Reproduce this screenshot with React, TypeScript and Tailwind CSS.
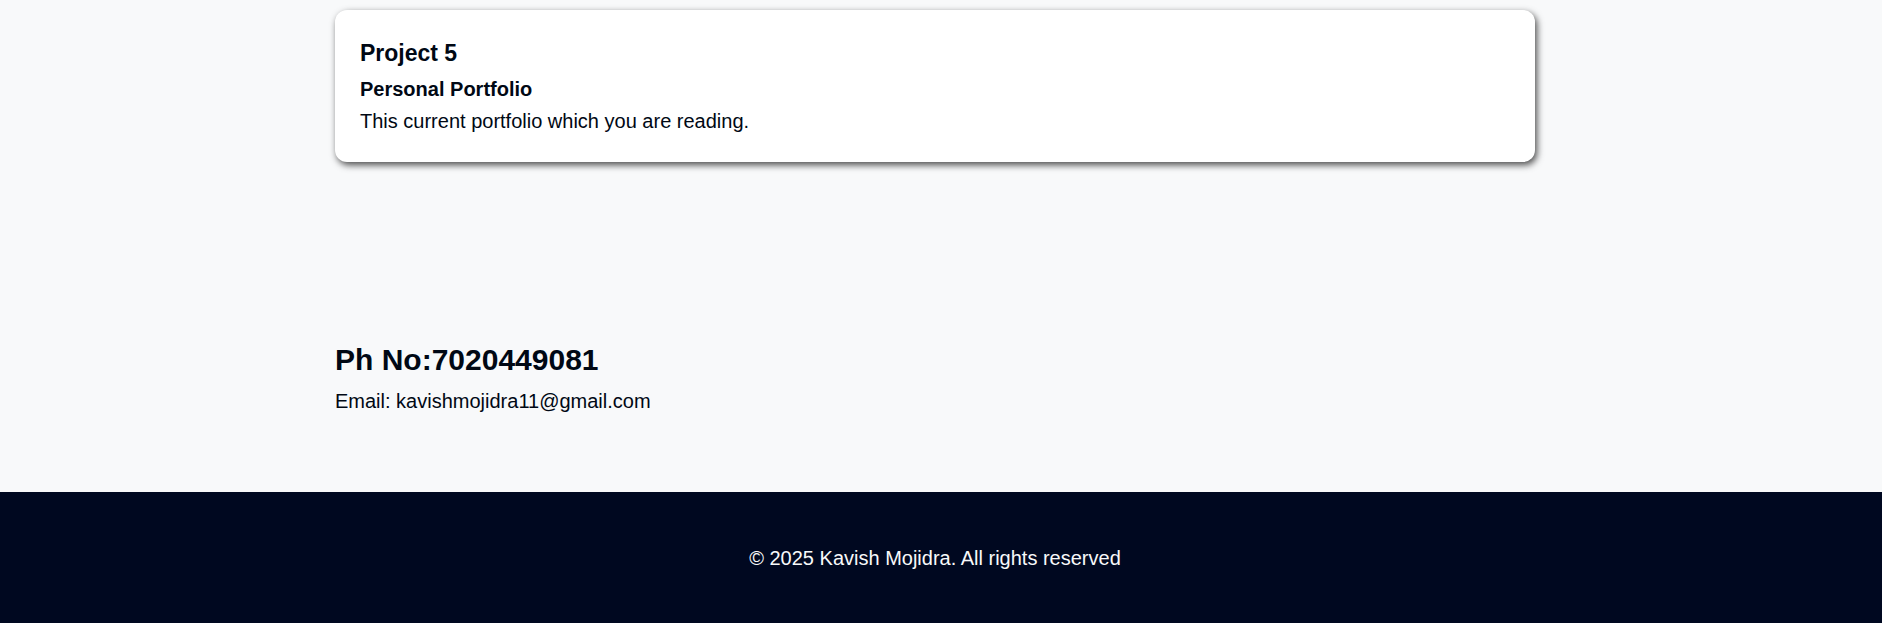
import React from "react";

export default function App() {
  return (
    <div className="min-h-screen bg-[#f8f9fa] font-['Liberation_Sans',Arial,sans-serif] text-[#000814]">
      <main className="pt-[10px] pb-[79px]">
        <div className="ml-[335px] w-[1200px]">
          <div className="rounded-[12px] bg-white px-[25px] pt-[29px] pb-[29px] shadow-[2px_3px_7px_rgba(0,0,0,0.7)]">
            <h3 className="text-[23px] leading-[28px] font-bold">Project 5</h3>
            <h4 className="mt-[10px] text-[20px] leading-[24px] font-bold">Personal Portfolio</h4>
            <p className="mt-[8px] text-[20px] leading-[24px]">This current portfolio which you are reading.</p>
          </div>
          <section className="mt-[181px]">
            <h2 className="text-[30px] leading-[34px] font-bold">Ph No:7020449081</h2>
            <p className="mt-[12px] text-[20px] leading-[24px]">Email: kavishmojidra11@gmail.com</p>
          </section>
        </div>
      </main>
      <footer className="bg-[#000820] pt-[54px] pb-[54px]">
        <p className="pr-[12px] text-center text-[20px] leading-[24px] text-[#f8f9fa]">
          © 2025 Kavish Mojidra. All rights reserved
        </p>
      </footer>
    </div>
  );
}
